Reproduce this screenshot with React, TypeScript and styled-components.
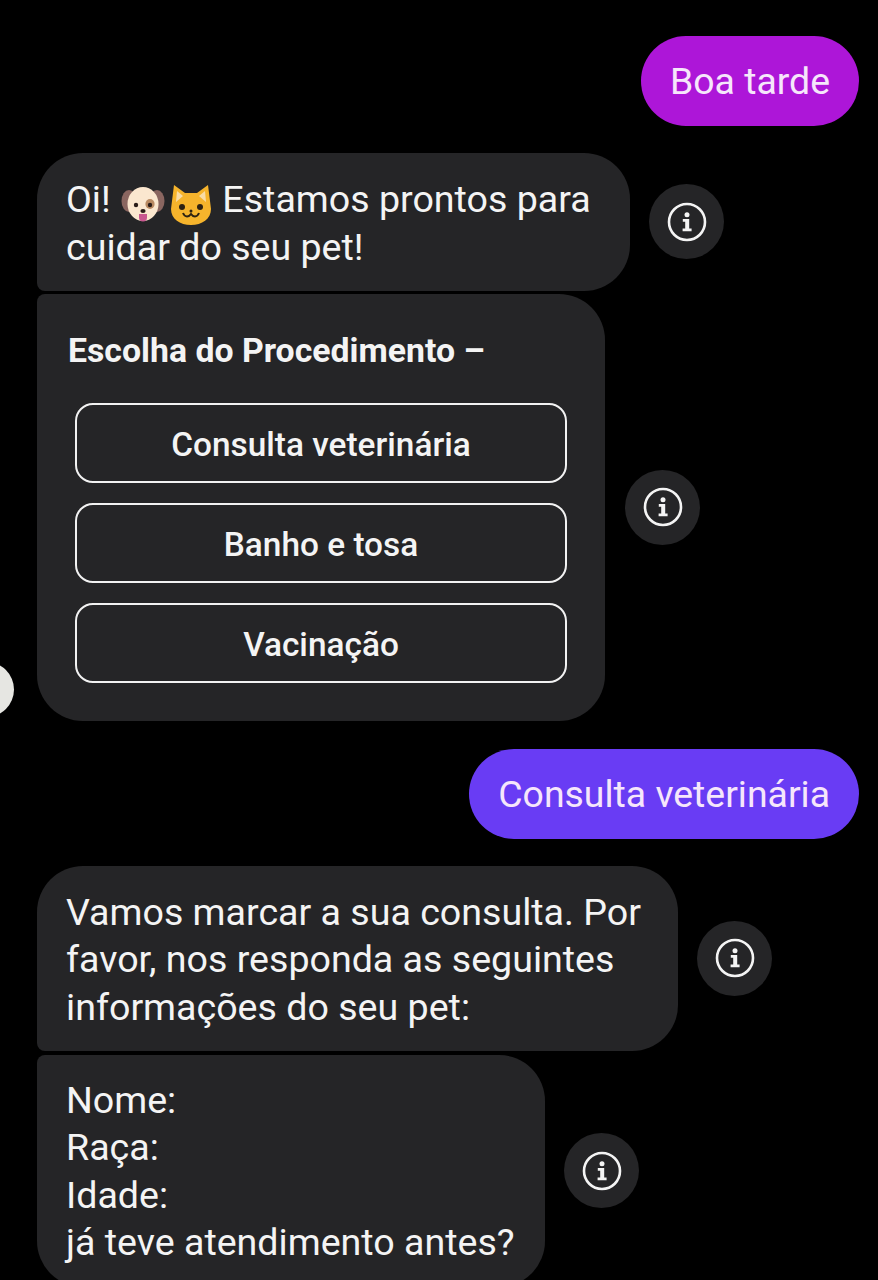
import * as React from "react";
import styled, { createGlobalStyle } from "styled-components";

const GlobalStyle = createGlobalStyle`
  html, body {
    margin: 0;
    padding: 0;
    background: #000;
  }
`;

const Screen = styled.div`
  position: relative;
  width: 878px;
  height: 1280px;
  overflow: hidden;
  background: #000;
  color: #f4f4f4;
  font-family: Roboto, "Liberation Sans", sans-serif;
  padding: 36px 19px 0 37px;
  box-sizing: border-box;
  display: flex;
  flex-direction: column;
`;

const SentRow = styled.div<{ $after: number }>`
  display: flex;
  justify-content: flex-end;
  margin-bottom: ${props => props.$after}px;
`;

const SentBubble = styled.div<{ $color: string }>`
  height: 90px;
  padding: 0 29px;
  display: flex;
  align-items: center;
  border-radius: 45px;
  background: ${props => props.$color};
  color: #f6e6fb;
  font-size: 37.4px;
`;

const ReceivedRow = styled.div<{ $after: number; $gap: number }>`
  display: flex;
  align-items: center;
  gap: ${props => props.$gap}px;
  margin-bottom: ${props => props.$after}px;
`;

const Bubble = styled.div<{ $width: number; $corners: string; $top: number }>`
  width: ${props => props.$width}px;
  box-sizing: border-box;
  padding: ${props => props.$top}px 0 ${props => 42.5 - props.$top}px 29px;
  background: #252527;
  border-radius: ${props => props.$corners};
  font-size: 37.6px;
  line-height: 47.5px;
  white-space: nowrap;
`;

const MenuBubble = styled.div`
  width: 568px;
  height: 427px;
  box-sizing: border-box;
  padding: 36px 38px 0;
  background: #252527;
  border-radius: 8px 46px 46px 46px;
`;

const MenuTitle = styled.div`
  margin-left: -7px;
  font-size: 33.8px;
  font-weight: 700;
  line-height: 42px;
  margin-bottom: 31px;
`;

const MenuList = styled.div`
  display: flex;
  flex-direction: column;
  gap: 20px;
`;

const MenuButton = styled.div`
  height: 80px;
  width: 492px;
  box-sizing: border-box;
  padding-top: 4px;
  display: flex;
  align-items: center;
  justify-content: center;
  border: 2.5px solid #f2f2f2;
  border-radius: 18px;
  font-size: 33.4px;
  font-weight: 500;
`;

const InfoCircle = styled.div`
  width: 75px;
  height: 75px;
  flex: none;
  display: flex;
  align-items: center;
  justify-content: center;
  border-radius: 50%;
  background: #252527;
`;

const EmojiSlot = styled.svg<{ $before: number }>`
  width: 44px;
  height: 42px;
  margin: -10px 0 -10px ${props => props.$before}px;
  vertical-align: -4px;
`;

const EdgeDot = styled.div`
  position: absolute;
  left: -41px;
  top: 662px;
  width: 55px;
  height: 55px;
  border-radius: 50%;
  background: #e6e6e2;
`;

const InfoIcon = () => (
  <svg width="40" height="40" viewBox="0 0 40 40" fill="none">
    <circle cx="20" cy="20" r="18" stroke="#f4f4f4" strokeWidth="2.6" />
    <circle cx="20" cy="12.8" r="2.5" fill="#f4f4f4" />
    <path
      d="M15.8 17h6.4v9.4h2.4v2.8h-9v-2.8h2.6v-6.6h-2.4z"
      fill="#f4f4f4"
    />
  </svg>
);

const DogEmoji = () => (
  <EmojiSlot $before={1} viewBox="0 0 44 42">
    <ellipse cx="8" cy="17" rx="7.5" ry="11" fill="#8a6660" />
    <ellipse cx="36" cy="17" rx="7.5" ry="11" fill="#8a6660" />
    <ellipse cx="22" cy="20" rx="15.5" ry="17" fill="#fbe7cf" />
    <ellipse cx="29" cy="20" rx="4.6" ry="5" fill="#b98a62" />
    <circle cx="15" cy="21" r="2.2" fill="#2a1c18" />
    <circle cx="29" cy="21" r="2.2" fill="#2a1c18" />
    <ellipse cx="22" cy="27" rx="2.6" ry="2" fill="#2a1c18" />
    <path d="M18 30h8v3.5a4 4 0 0 1-8 0z" fill="#c9578f" />
  </EmojiSlot>
);

const CatEmoji = () => (
  <EmojiSlot $before={4} viewBox="0 0 44 42">
    <path
      d="M5 1l11 8h12l11-8 3 24c0 10-9 16-20 16S2 35 2 25z"
      fill="#f6b42c"
    />
    <path d="M8 7l6 5-7 6zM36 7l-6 5 7 6z" fill="#f9dca6" />
    <circle cx="13" cy="23" r="3" fill="#2e2212" />
    <circle cx="31" cy="23" r="3" fill="#2e2212" />
    <circle cx="22" cy="27" r="1.5" fill="#2e2212" />
    <path
      d="M14 29c2 5 6 4 8 1 2 3 6 4 8-1"
      stroke="#2e2212"
      strokeWidth="2"
      fill="none"
    />
  </EmojiSlot>
);

const App = () => (
  <Screen>
    <GlobalStyle />
    <EdgeDot />
    <SentRow $after={27}>
      <SentBubble $color="#ad16d8">Boa tarde</SentBubble>
    </SentRow>
    <ReceivedRow $after={3} $gap={19}>
      <Bubble $width={593} $top={23} $corners="46px 46px 46px 8px">
        Oi! <DogEmoji />
        <CatEmoji /> Estamos prontos para
        <br />
        cuidar do seu pet!
      </Bubble>
      <InfoCircle>
        <InfoIcon />
      </InfoCircle>
    </ReceivedRow>
    <ReceivedRow $after={28} $gap={20}>
      <MenuBubble>
        <MenuTitle>Escolha do Procedimento –</MenuTitle>
        <MenuList>
          <MenuButton>Consulta veterinária</MenuButton>
          <MenuButton>Banho e tosa</MenuButton>
          <MenuButton>Vacinação</MenuButton>
        </MenuList>
      </MenuBubble>
      <InfoCircle>
        <InfoIcon />
      </InfoCircle>
    </ReceivedRow>
    <SentRow $after={27}>
      <SentBubble $color="#693cf4">Consulta veterinária</SentBubble>
    </SentRow>
    <ReceivedRow $after={4} $gap={19}>
      <Bubble $width={641} $top={23} $corners="46px 46px 46px 8px">
        Vamos marcar a sua consulta. Por
        <br />
        favor, nos responda as seguintes
        <br />
        informações do seu pet:
      </Bubble>
      <InfoCircle>
        <InfoIcon />
      </InfoCircle>
    </ReceivedRow>
    <ReceivedRow $after={0} $gap={19}>
      <Bubble $width={508} $top={22} $corners="8px 46px 46px 46px">
        Nome:
        <br />
        Raça:
        <br />
        Idade:
        <br />
        já teve atendimento antes?
      </Bubble>
      <InfoCircle>
        <InfoIcon />
      </InfoCircle>
    </ReceivedRow>
  </Screen>
);

export default App;
